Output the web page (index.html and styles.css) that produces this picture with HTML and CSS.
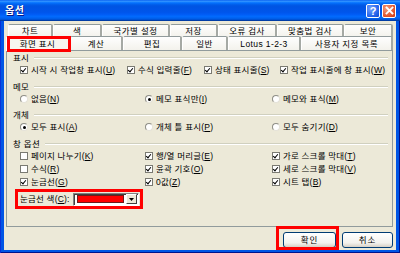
FILE: index.html
```html
<!DOCTYPE html>
<html lang="ko">
<head>
<meta charset="utf-8">
<link rel="stylesheet" href="styles.css">
</head>
<body>
<div class="window">
  <div class="titlebar">
    <span class="title">옵션</span>
    <div class="tbtns">
      <span class="tbtn help">?</span>
      <span class="tbtn close"><svg width="9" height="9" viewBox="0 0 9 9"><path d="M1.5 1.5L7.5 7.5M7.5 1.5L1.5 7.5" stroke="#fff" stroke-width="1.8" stroke-linecap="square"/></svg></span>
    </div>
  </div>
  <div class="frame">
    <div class="client">
      <div class="tabrow row1">
        <span class="tab">차트</span>
        <span class="tab">색</span>
        <span class="tab">국가별 설정</span>
        <span class="tab">저장</span>
        <span class="tab">오류 검사</span>
        <span class="tab">맞춤법 검사</span>
        <span class="tab">보안</span>
      </div>
      <div class="tabrow row2">
        <span class="tab sel">화면 표시</span>
        <span class="tab">계산</span>
        <span class="tab">편집</span>
        <span class="tab">일반</span>
        <span class="tab">Lotus 1-2-3</span>
        <span class="tab">사용자 지정 목록</span>
      </div>
      <div class="panel">
        <div class="sec"><span>표시</span><i class="rule"></i></div>
        <div class="row cols4">
          <label class="item"><span class="cb on"></span><span>시작 시 작업창 표시(<u>U</u>)</span></label>
          <label class="item"><span class="cb on"></span><span>수식 입력줄(<u>F</u>)</span></label>
          <label class="item"><span class="cb on"></span><span>상태 표시줄(<u>S</u>)</span></label>
          <label class="item"><span class="cb on"></span><span>작업 표시줄에 창 표시(<u>W</u>)</span></label>
        </div>
        <div class="sec gap5"><span>메모</span><i class="rule"></i></div>
        <div class="row cols3">
          <label class="item"><span class="rb"></span><span>없음(<u>N</u>)</span></label>
          <label class="item"><span class="rb on"></span><span>메모 표식만(<u>I</u>)</span></label>
          <label class="item"><span class="rb"></span><span>메모와 표식(<u>M</u>)</span></label>
        </div>
        <div class="sec gap4"><span>개체</span><i class="rule"></i></div>
        <div class="row cols3">
          <label class="item"><span class="rb on"></span><span>모두 표시(<u>A</u>)</span></label>
          <label class="item"><span class="rb"></span><span>개체 틀 표시(<u>P</u>)</span></label>
          <label class="item"><span class="rb"></span><span>모두 숨기기(<u>D</u>)</span></label>
        </div>
        <div class="sec gap5"><span>창 옵션</span><i class="rule"></i></div>
        <div class="grid cols3">
          <label class="item"><span class="cb"></span><span>페이지 나누기(<u>K</u>)</span></label>
          <label class="item"><span class="cb on"></span><span>행/열 머리글(<u>E</u>)</span></label>
          <label class="item"><span class="cb on"></span><span>가로 스크롤 막대(<u>T</u>)</span></label>
          <label class="item"><span class="cb"></span><span>수식(<u>R</u>)</span></label>
          <label class="item"><span class="cb on"></span><span>윤곽 기호(<u>O</u>)</span></label>
          <label class="item"><span class="cb on"></span><span>세로 스크롤 막대(<u>V</u>)</span></label>
          <label class="item"><span class="cb on"></span><span>눈금선(<u>G</u>)</span></label>
          <label class="item"><span class="cb on"></span><span>0값(<u>Z</u>)</span></label>
          <label class="item"><span class="cb on"></span><span>시트 탭(<u>B</u>)</span></label>
        </div>
        <div class="colorrow">
          <span class="clabel">눈금선 색(<u>C</u>):</span>
          <span class="combo">
            <span class="swatch"></span>
            <span class="arrow"><svg width="5" height="3" viewBox="0 0 5 3"><path d="M0 0H5L2.5 3Z" fill="#000"/></svg></span>
          </span>
        </div>
      </div>
      <div class="buttons">
        <span class="btn ok">확인</span>
        <span class="btn cancel">취소</span>
      </div>
    </div>
  </div>
  <span class="mark mark-tab"></span>
  <span class="mark mark-color"></span>
  <span class="mark mark-ok"></span>
</div>
</body>
</html>
```
FILE: styles.css
```css
* { box-sizing: border-box; margin: 0; padding: 0; }
body {
  margin: 0;
  width: 400px;
  height: 253px;
  overflow: hidden;
  background: #fff;
  font-family: "Liberation Sans", "Noto Sans CJK KR", sans-serif;
  font-size: 8.5px;
  line-height: 12px;
  color: #000;
}
.window {
  position: relative;
  width: 400px;
  height: 253px;
  display: flex;
  flex-direction: column;
}
.titlebar {
  height: 21px;
  flex: none;
  display: flex;
  align-items: center;
  justify-content: space-between;
  padding: 0 4px 0 5px;
  background: linear-gradient(to bottom, #0058EE 0%, #3593FF 5%, #288EFF 8%, #127DFF 11%, #036FFC 15%, #0262EE 20%, #0057E5 27%, #0054E3 32%, #0055EB 58%, #005BF5 68%, #026AFE 78%, #0062EF 87%, #0052D6 93%, #0040AB 97%, #003092 100%);
}
.title {
  color: #fff;
  font-weight: bold;
  font-size: 10px;
  letter-spacing: 0.5px;
  text-shadow: 1px 1px 0 #0A1883;
}
.tbtns { display: flex; gap: 2px; }
.tbtn {
  width: 14px;
  height: 14px;
  border: 1px solid #fff;
  border-radius: 2px;
  display: flex;
  align-items: center;
  justify-content: center;
  color: #fff;
  font-family: "Liberation Sans", sans-serif;
  font-weight: bold;
  font-size: 11px;
}
.help { background: radial-gradient(circle at 30% 30%, #6FA0FF, #2160E8 70%, #1346C8); }
.close { background: radial-gradient(circle at 30% 30%, #F49C7E, #E2542C 65%, #C63A14); }
.frame {
  flex: 1;
  display: flex;
  padding: 0 4px 3px;
  background: #0055E5;
  box-shadow: inset 1px 0 #0831D9, inset -1px 0 #00138C, inset 0 -1px #00138C;
}
.client {
  flex: 1;
  display: flex;
  flex-direction: column;
  background: #ECE9D8;
  padding: 3px 3px 0 2px;
}
.tabrow { display: grid; position: relative; }
.row1 {
  height: 12px;
  margin-left: 2px;
  grid-template-columns: 45px 49px 68px 48px 59px 67px 49px;
}
.row2 {
  height: 14px;
  grid-template-columns: 64px 53px 59px 46px 73px 92px;
}
.tab {
  display: flex;
  align-items: center;
  justify-content: center;
  background: linear-gradient(#FEFEFE, #F3F2EC);
  border-top: 1px solid #919B9C;
  border-left: 1px solid #fff;
  border-right: 2px solid #A5A9A4;
  border-radius: 2px 2px 0 0;
  letter-spacing: 0.4px;
  white-space: nowrap;
}
.row1 .tab { border-bottom: 1px solid #D8D5C6; }
.tab.sel {
  position: relative;
  z-index: 1;
  margin-bottom: -1px;
  background: #F7F6F0;
}
.panel {
  height: 177px;
  flex: none;
  display: flex;
  flex-direction: column;
  border: 1px solid #919B9C;
  background: #ECE9D8;
  padding: 1px 4px 0 6px;
}
.sec {
  height: 12px;
  display: flex;
  align-items: center;
  gap: 5px;
  letter-spacing: 0.3px;
}
.sec.gap5 { margin-top: 5px; }
.sec.gap4 { margin-top: 4px; }
.rule {
  flex: 1;
  height: 2px;
  border-top: 1px solid #D0D0BF;
  border-bottom: 1px solid #fff;
}
.row { display: grid; height: 12px; padding-left: 7px; }
.cols4 { grid-template-columns: 107px 77px 76px 1fr; }
.cols3 { grid-template-columns: 125px 127px 1fr; }
.grid {
  display: grid;
  padding-left: 7px;
  margin-top: -1px;
  grid-auto-rows: 13px;
}
.item {
  display: flex;
  align-items: center;
  gap: 3px;
  white-space: nowrap;
  letter-spacing: 0.2px;
}
.cb {
  flex: none;
  width: 8px;
  height: 8px;
  border: 1px solid #7A7A72;
  background: #fff;
  position: relative;
}
.cb.on::after {
  content: "";
  position: absolute;
  left: 1px;
  top: 0px;
  width: 2px;
  height: 4px;
  border: solid #000;
  border-width: 0 1.5px 1.5px 0;
  transform: rotate(40deg);
}
.rb {
  flex: none;
  width: 8px;
  height: 8px;
  border-radius: 50%;
  border: 1px solid;
  border-color: #8E8E86 #E4E2D8 #E4E2D8 #8E8E86;
  background: #fff;
  position: relative;
}
.rb.on::after {
  content: "";
  position: absolute;
  left: 1.5px;
  top: 1.5px;
  width: 3px;
  height: 3px;
  border-radius: 50%;
  background: #000;
}
.colorrow {
  display: flex;
  align-items: center;
  height: 14px;
  margin-top: 4px;
  padding-left: 7px;
  gap: 2px;
}
.clabel { white-space: nowrap; width: 51px; letter-spacing: 0.2px; }
.combo {
  width: 66px;
  height: 13px;
  display: flex;
  align-items: center;
  gap: 2px;
  padding: 1px 1px 1px 3px;
  border: 1px solid;
  border-color: #808080 #fff #fff #808080;
  background: #fff;
  box-shadow: inset 1px 1px #404040;
}
.swatch {
  flex: 1;
  height: 8px;
  background: #FF0000;
  border: 1px solid #6B1B1B;
}
.arrow {
  width: 11px;
  height: 10px;
  display: flex;
  align-items: center;
  justify-content: center;
  background: #ECE9D8;
  border: 1px solid;
  border-color: #fff #404040 #404040 #fff;
}
.buttons {
  display: flex;
  justify-content: flex-end;
  gap: 6px;
  margin-top: 5px;
  height: 16px;
}
.btn {
  display: flex;
  align-items: center;
  justify-content: center;
  height: 16px;
  border: 1px solid #003C74;
  border-radius: 3px;
  background: linear-gradient(#FFFFFF, #F3F2EE 70%, #D6D0C5);
  letter-spacing: 1px;
}
.ok { width: 53px; }
.cancel { width: 51px; }
.mark {
  position: absolute;
  border: 3px solid #FF0000;
  z-index: 5;
}
.mark-tab { left: 7px; top: 36px; width: 64px; height: 16px; }
.mark-color { left: 15px; top: 189px; width: 128px; height: 20px; }
.mark-ok { left: 276px; top: 226px; width: 63px; height: 24px; }
```
